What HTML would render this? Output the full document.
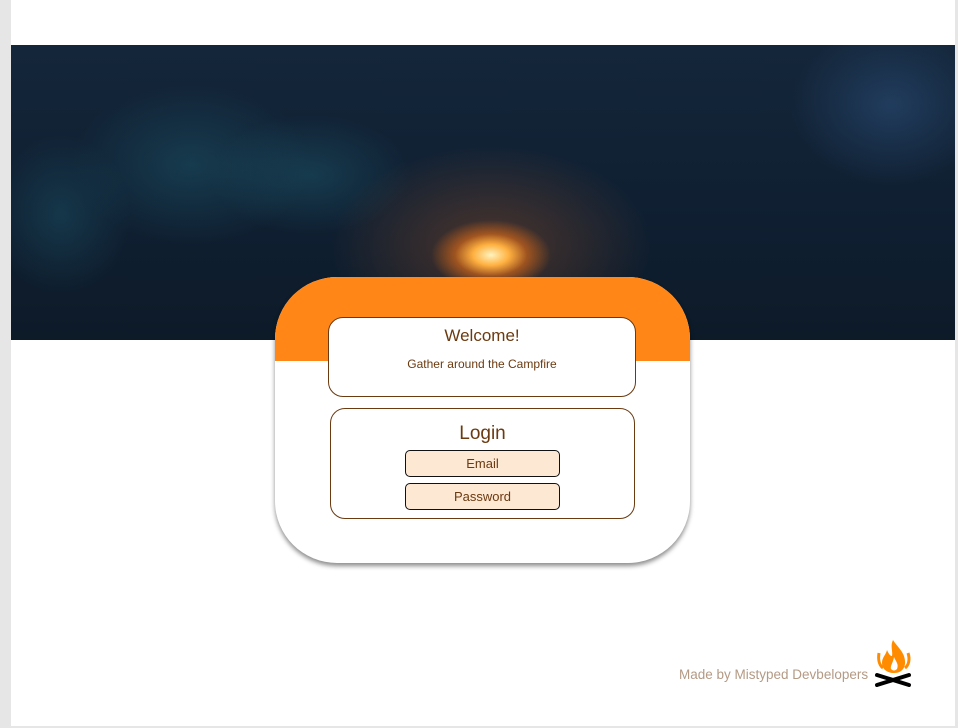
<!DOCTYPE html>
<html><head><meta charset="utf-8"><style>
body{margin:0;width:958px;height:728px;background:#e6e6e6;font-family:"Liberation Sans",sans-serif;position:relative;overflow:hidden}
.page{position:absolute;left:11px;top:0;width:944px;height:726px;background:#fff}
.hero{position:absolute;left:11px;top:45px;width:944px;height:295px;
background:
radial-gradient(ellipse 60px 35px at 480px 210px,#fff4c0 0%,#ffb040 30%,rgba(255,120,20,.5) 60%,rgba(0,0,0,0) 100%),
radial-gradient(ellipse 160px 100px at 480px 200px,rgba(150,80,40,.45),rgba(0,0,0,0) 100%),
radial-gradient(ellipse 120px 80px at 180px 120px,rgba(30,90,110,.45),rgba(0,0,0,0)),
radial-gradient(ellipse 100px 60px at 300px 130px,rgba(30,90,110,.45),rgba(0,0,0,0)),
radial-gradient(ellipse 70px 80px at 50px 170px,rgba(30,90,110,.4),rgba(0,0,0,0)),
radial-gradient(ellipse 100px 80px at 880px 60px,rgba(50,90,140,.45),rgba(0,0,0,0)),
linear-gradient(#14263a,#0f1f31 60%,#0d1a28)}
.card{position:absolute;left:275px;top:277px;width:415px;height:286px;border-radius:62px;background:#fff;overflow:hidden;box-shadow:0 3px 5px rgba(0,0,0,.45)}
.card .top{height:84px;background:#ff8617}
.box{position:absolute;border:1px solid #6b3a10;border-radius:15px;background:#fff;text-align:center;color:#6b3a10}
.in{position:absolute;left:405px;width:153px;height:25px;border:1px solid #111;border-radius:5px;background:#fde8d4;color:#6b3a10;font-size:13px;text-align:center;line-height:25px}
</style></head><body>
<div class="page"></div>
<div class="hero"></div>
<div class="card"><div class="top"></div></div>
<div class="box" style="left:328px;top:317px;width:306px;height:78px">
<div style="font-size:17px;margin-top:8px">Welcome!</div>
<div style="font-size:12px;margin-top:11px">Gather around the Campfire</div></div>
<div class="box" style="left:330px;top:408px;width:303px;height:109px">
<div style="font-size:19px;margin-top:14px">Login</div></div>
<div class="in" style="top:450px">Email</div>
<div class="in" style="top:483px">Password</div>
<div style="position:absolute;left:679px;top:667px;font-size:13.5px;color:#b49a84">Made by Mistyped Devbelopers</div>
<svg style="position:absolute;left:874px;top:639px" width="40" height="48" viewBox="0 0 40 48">
<path d="M19 1C24 9 32 14 31 25C30 31 26 34 20 34C13 34 8 30 8 24C8 18 12 16 13 11C15 16 17 17 18 17C19 12 16 7 19 1Z" fill="#ff8c00"/>
<path d="M20 18C22 23 25 25 23 30C21 32 19 32 17 30C16 27 19 24 20 18Z" fill="#fff"/>
<path d="M5 14C4 20 5 26 9 29" stroke="#ff8c00" stroke-width="3" fill="none"/>
<path d="M34 14C36 20 35 26 31 29" stroke="#ff8c00" stroke-width="3" fill="none"/>
<path d="M3 36L35 46M3 46L35 36" stroke="#000" stroke-width="4" stroke-linecap="round"/>
</svg>
</body></html>
